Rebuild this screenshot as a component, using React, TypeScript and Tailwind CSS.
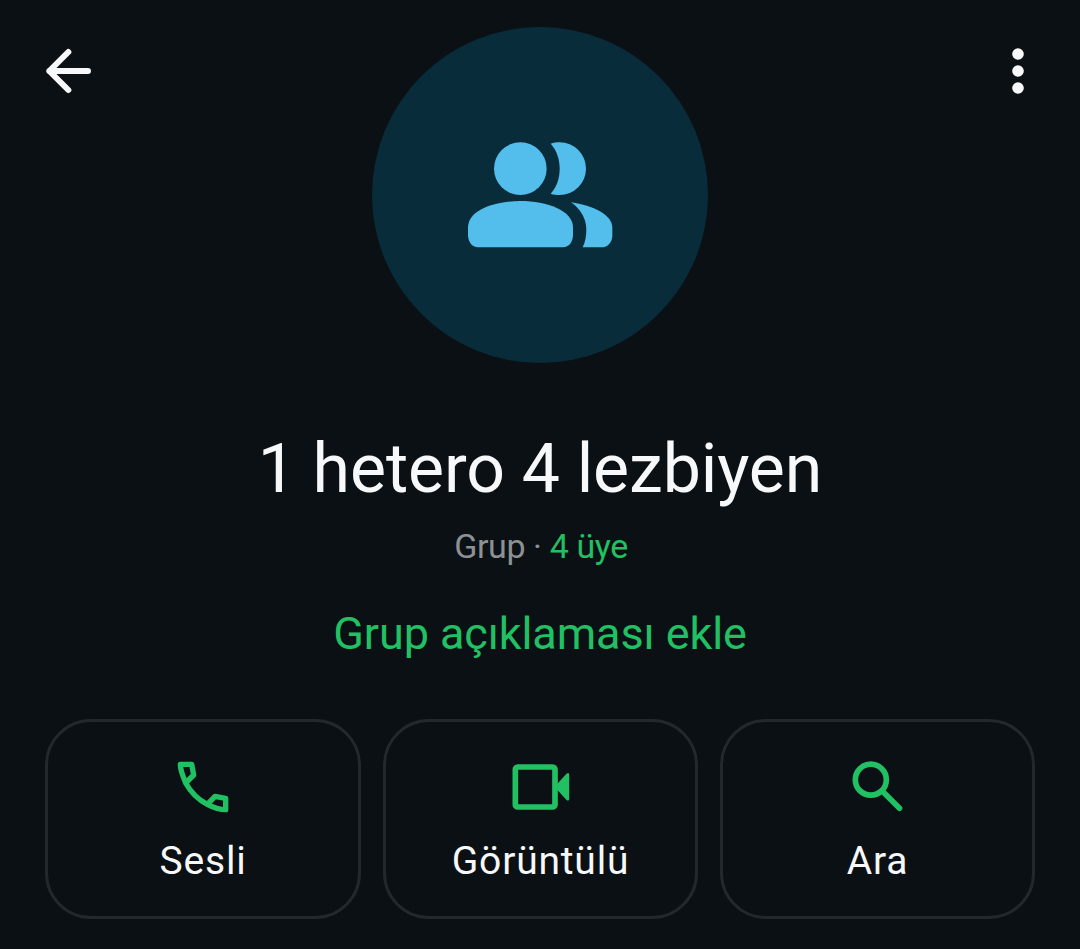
import type { ReactNode } from "react"

interface ActionCardProps {
  label: string
  children: ReactNode
}

function BackIcon() {
  return (
    <svg viewBox="0 0 240 240" className="h-20 w-20" fill="none" stroke="#f7f8fa" strokeWidth="18" strokeLinecap="round" strokeLinejoin="round">
      <path d="M174 123H58M115 66L58 123L115 180" />
    </svg>
  )
}

function MenuIcon() {
  return (
    <svg viewBox="-30 0 240 240" className="h-20 w-20" fill="#f7f8fa">
      <circle cx="114" cy="72" r="17.5" />
      <circle cx="114" cy="123" r="17.5" />
      <circle cx="114" cy="174" r="17.5" />
    </svg>
  )
}

function GroupIcon() {
  return (
    <svg viewBox="0 0 540 450" className="h-[150px] w-[180px]" fill="#53bdeb">
      <circle cx="211" cy="146" r="79" />
      <path d="M302 71C311 68 320 67 329 67A79 79 0 0 1 329 225C320 225 311 224 302 221C321 200 329 174 329 146C329 118 321 92 302 71Z" />
      <path d="M54 322C54 272 130 243 211 243C292 243 369 272 369 322V345C369 365 357 382 339 382H84C66 382 54 365 54 345Z" />
      <path d="M363 247C430 257 487 285 487 322V347C487 366 473 382 455 382H398C406 367 409 347 409 328C409 295 391 267 363 247Z" />
    </svg>
  )
}

function PhoneIcon() {
  return (
    <svg viewBox="48 45 162 162" className="h-[54px] w-[54px]" fill="none" stroke="#21c063" strokeWidth="16" strokeLinejoin="round">
      <path d="M61 58H95L101 90L77 114C71 99 61 78 61 58ZM77 114C92 141 114 164 142 178M142 178L165 154L197 160V194C178 194 159 187 142 178Z" />
    </svg>
  )
}

function VideoIcon() {
  return (
    <svg viewBox="46.5 45 180 162" className="h-[54px] w-[60px]" fill="#21c063">
      <rect x="59.5" y="66" width="119" height="120" rx="7" fill="none" stroke="#21c063" strokeWidth="17" />
      <path d="M183 119L213 86Q221 81 221 90V161Q221 170 213 165L183 132Z" />
    </svg>
  )
}

function SearchIcon() {
  return (
    <svg viewBox="46.5 45 162 162" className="h-[54px] w-[54px]" fill="none" stroke="#21c063" strokeWidth="17" strokeLinecap="round">
      <circle cx="106" cy="104" r="46.5" />
      <path d="M140 138L192 190" />
    </svg>
  )
}

function ActionCard({ label, children }: ActionCardProps) {
  return (
    <button className="flex h-[200px] flex-col items-center rounded-[46px] border-[3px] border-[#23282c] pt-[38px]">
      {children}
      <span className="mt-6 text-[39px] leading-[46px] tracking-[0.8px] text-[#f7f8fa]">{label}</span>
    </button>
  )
}

export default function App() {
  return (
    <div className="h-[949px] w-[1080px] overflow-hidden bg-[#0b1014] font-['Roboto',sans-serif]">
      <header className="flex items-start justify-between px-[30px] pt-[26px]">
        <button className="mt-1">
          <BackIcon />
        </button>
        <div className="mt-px flex h-[336px] w-[336px] items-center justify-center rounded-full bg-[#092c3b]">
          <GroupIcon />
        </div>
        <button className="mt-1">
          <MenuIcon />
        </button>
      </header>

      <section className="mt-[66px] flex flex-col items-center">
        <h1 className="text-[68px] leading-[80px] tracking-[-0.1px] text-[#f7f8fa]">1 hetero 4 lezbiyen</h1>
        <p className="mt-[17px] pl-[2px] text-[34px] leading-10 tracking-[-0.4px] text-[#8d9195]">
          Grup · <span className="text-[#21c063]">4 üye</span>
        </p>
        <button className="mt-[42px] text-[45px] leading-[52px] tracking-[-0.1px] text-[#21c063]">Grup açıklaması ekle</button>
      </section>

      <div className="mt-[59px] grid grid-cols-[316px_315px_315px] gap-[22px] px-[45px]">
        <ActionCard label="Sesli">
          <PhoneIcon />
        </ActionCard>
        <ActionCard label="Görüntülü">
          <VideoIcon />
        </ActionCard>
        <ActionCard label="Ara">
          <SearchIcon />
        </ActionCard>
      </div>
    </div>
  )
}
